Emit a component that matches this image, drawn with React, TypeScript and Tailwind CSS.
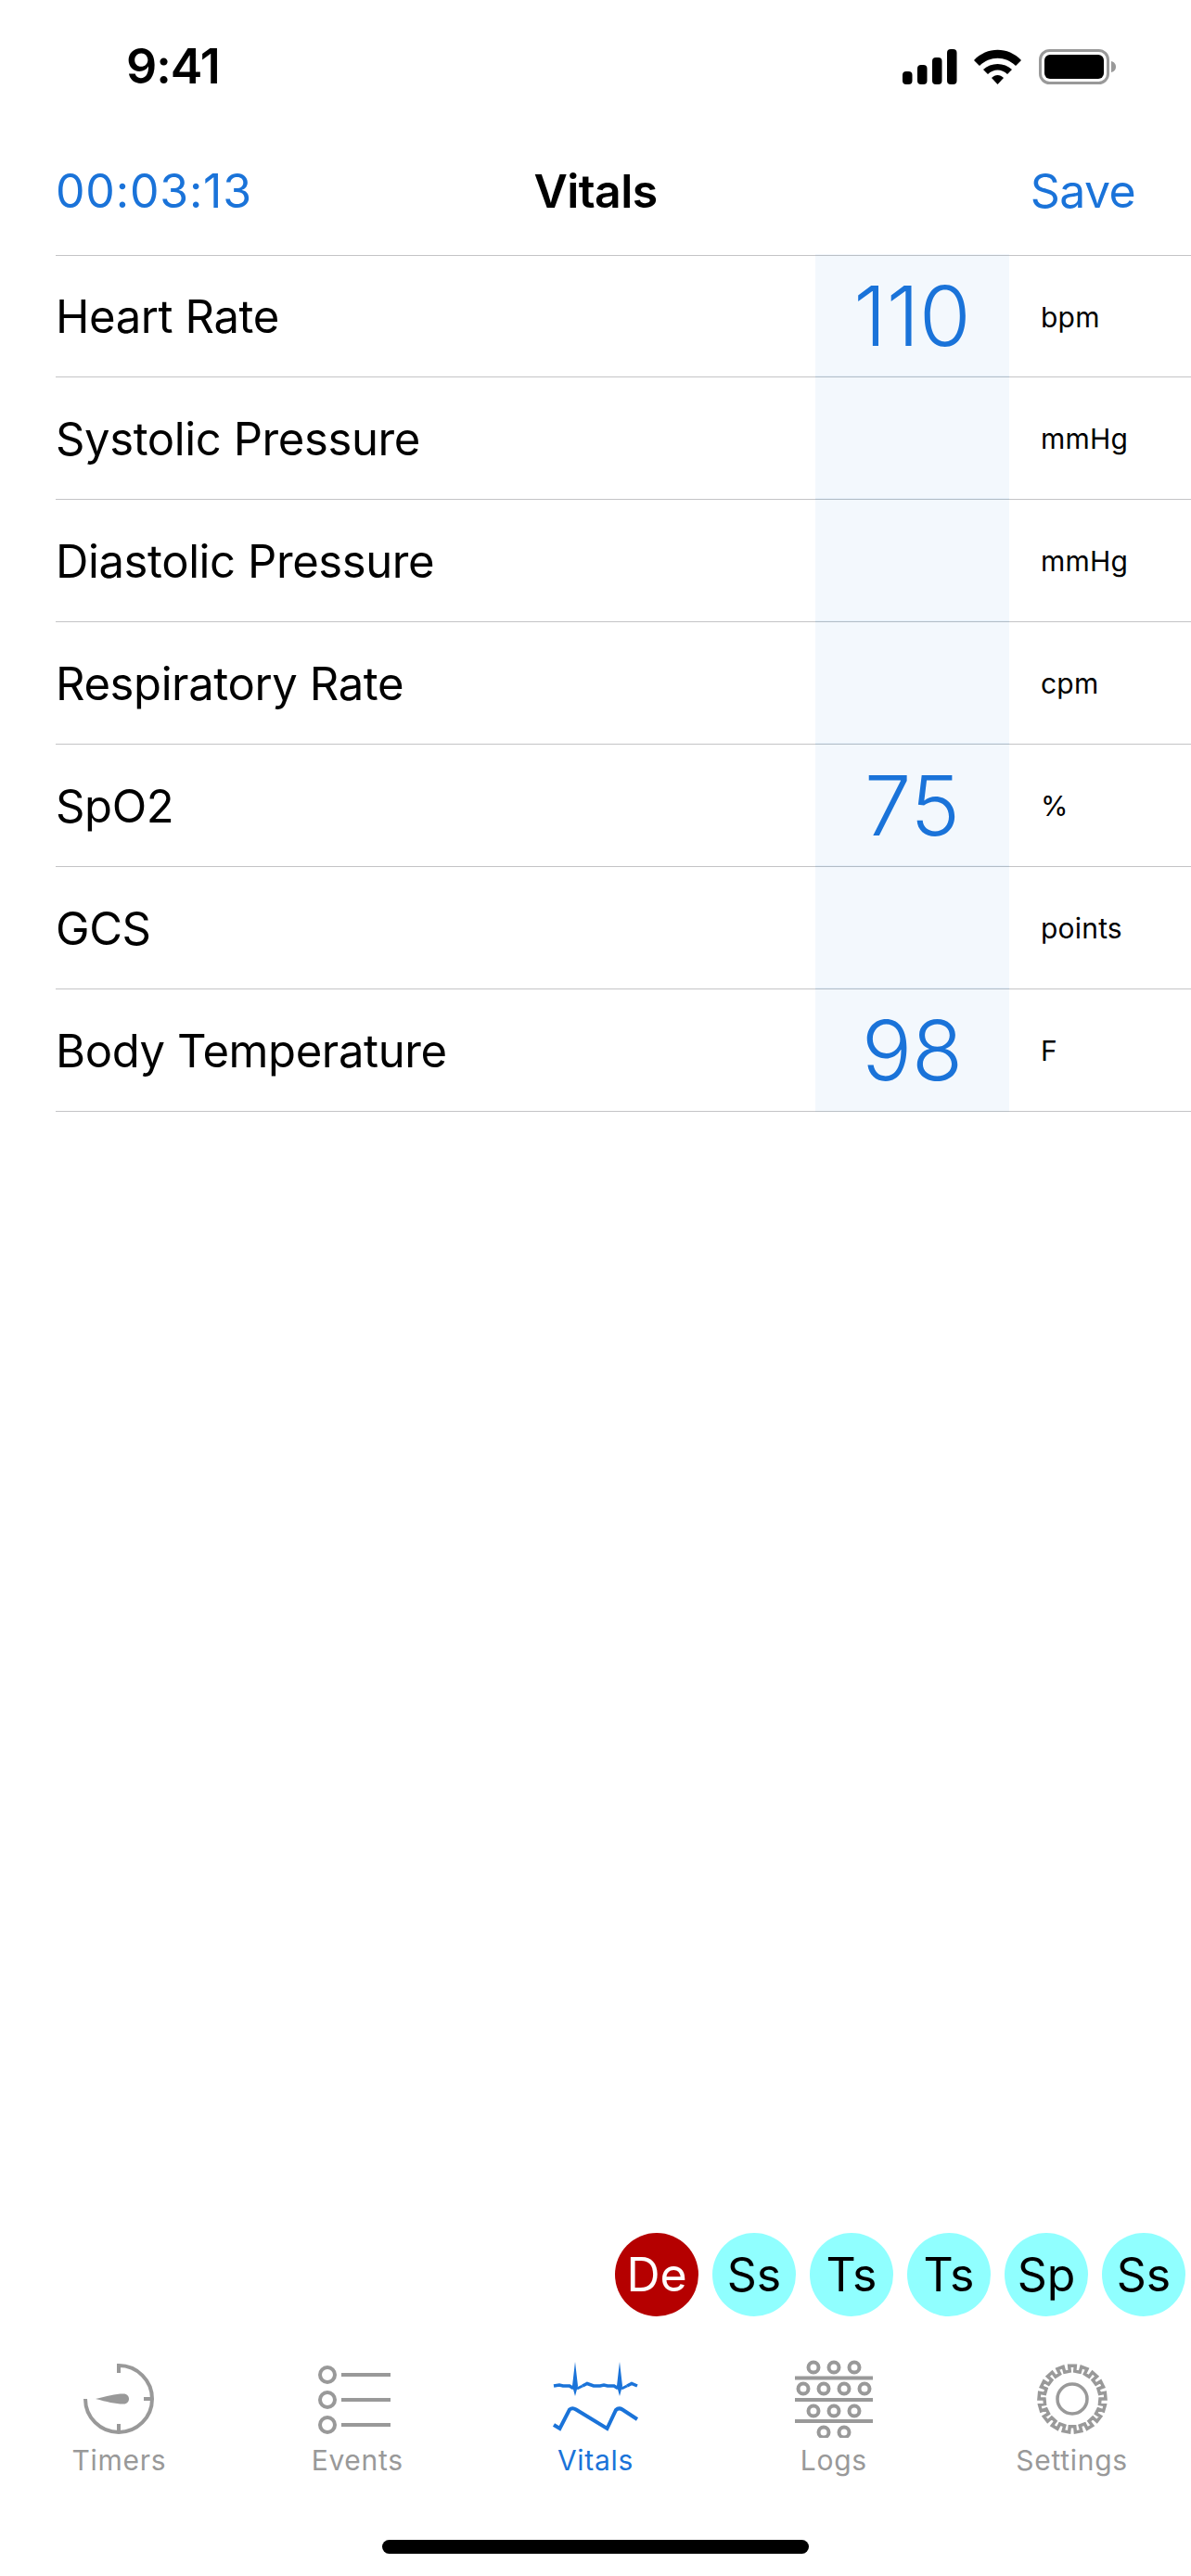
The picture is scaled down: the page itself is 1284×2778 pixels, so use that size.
const vitals = [
  { label: 'Heart Rate', value: '110', unit: 'bpm' },
  { label: 'Systolic Pressure', value: '', unit: 'mmHg' },
  { label: 'Diastolic Pressure', value: '', unit: 'mmHg' },
  { label: 'Respiratory Rate', value: '', unit: 'cpm' },
  { label: 'SpO2', value: '75', unit: '%' },
  { label: 'GCS', value: '', unit: 'points' },
  { label: 'Body Temperature', value: '98', unit: 'F' },
]

const badges = [
  { text: 'De', active: true },
  { text: 'Ss' },
  { text: 'Ts' },
  { text: 'Ts' },
  { text: 'Sp' },
  { text: 'Ss' },
]

const tabs = [
  { label: 'Timers', Icon: TimersIcon },
  { label: 'Events', Icon: EventsIcon },
  { label: 'Vitals', Icon: VitalsIcon, active: true },
  { label: 'Logs', Icon: LogsIcon },
  { label: 'Settings', Icon: SettingsIcon },
]

export default function App() {
  return (
    <div className="flex h-[2778px] flex-col overflow-hidden bg-white font-['Inter',sans-serif] text-black">
      {/* Status bar */}
      <div className="flex h-[144px] items-center justify-between pl-[136px] pr-[80px]">
        <span className="text-[52px] font-semibold tracking-[-1px]">9:41</span>
        <StatusIcons />
      </div>

      {/* Nav bar */}
      <div className="flex h-[131px] items-center justify-between px-[60px] pb-[6px] text-[50px]">
        <span className="w-[300px] tracking-[0.8px] text-[#1a73d9]">00:03:13</span>
        <span className="font-semibold tracking-[-0.6px]">Vitals</span>
        <span className="w-[300px] text-right tracking-[-0.6px] text-[#1a73d9]">Save</span>
      </div>

      {/* Vitals list */}
      <div className="ml-[60px] border-t border-[#c4c4c6]">
        {vitals.map((v) => (
          <div key={v.label} className="flex h-[132px] items-stretch border-b border-[#c4c4c6] first:h-[131px]">
            <div className="flex flex-1 items-center pt-[2px] text-[49px] tracking-[-0.4px]">{v.label}</div>
            <div className="-mb-px -mt-[2px] flex w-[209px] items-center justify-center bg-[#1a73d9]/5 text-[90px] font-light text-[#1a73d9]">
              {v.value}
            </div>
            <div className="flex w-[196px] items-center pl-[34px] pt-[2px] text-[30px] tracking-[0.2px]">{v.unit}</div>
          </div>
        ))}
      </div>

      <div className="flex-1" />

      {/* Staff badges */}
      <div className="flex justify-end gap-[15px] pr-[6px]">
        {badges.map((b, i) => (
          <div
            key={i}
            className={
              b.active
                ? 'flex h-[90px] w-[90px] items-center justify-center rounded-full bg-[#b50000] text-[50px] text-white'
                : 'flex h-[90px] w-[90px] items-center justify-center rounded-full bg-[#90ffff] text-[50px] text-black'
            }
          >
            {b.text}
          </div>
        ))}
      </div>

      {/* Tab bar */}
      <div className="mt-[47px] grid grid-cols-5">
        {tabs.map(({ label, Icon, active }) => (
          <div key={label} className="flex flex-col items-center">
            <Icon />
            <span className={active ? 'mt-[6px] text-[30px] leading-[36px] tracking-[0.7px] text-[#1a73d9]' : 'mt-[6px] text-[30px] leading-[36px] tracking-[0.7px] text-[#999999]'}>
              {label}
            </span>
          </div>
        ))}
      </div>

      {/* Home indicator */}
      <div className="mb-[24px] mt-[68px] flex justify-center">
        <div className="h-[15px] w-[460px] rounded-full bg-black" />
      </div>
    </div>
  )
}

function StatusIcons() {
  return (
    <svg width="232" height="40" viewBox="972 52 232 40">
      <rect x="973" y="77" width="10.5" height="14" rx="4" fill="#000" />
      <rect x="989" y="70" width="10.5" height="21" rx="4" fill="#000" />
      <rect x="1005" y="62" width="10.5" height="29" rx="4" fill="#000" />
      <rect x="1021" y="53" width="10.5" height="38" rx="4" fill="#000" />
      <path d="M1050 65 C1064 50 1087 50 1101 65 L1095 71 C1084 60 1067 60 1056 71 Z" fill="#000" />
      <path d="M1060 75 C1068 67 1083 67 1091 75 L1086 80 C1080 74 1071 74 1065 80 Z" fill="#000" />
      <path d="M1069 84 C1073 80 1078 80 1082 84 L1075.5 91 Z" fill="#000" />
      <rect x="1121.5" y="54.5" width="73" height="35" rx="10" fill="none" stroke="#999" strokeWidth="3" />
      <rect x="1126" y="59" width="64" height="26" rx="6" fill="#000" />
      <path d="M1198 66 C1202 67 1203 70 1203 72 C1203 74 1202 77 1198 78 Z" fill="#999" />
    </svg>
  )
}

function TimersIcon() {
  return (
    <svg width="100" height="84" viewBox="79 2544 100 84" fill="none" stroke="#999" strokeWidth="4">
      <path d="M129 2558 V2550 A36 36 0 1 1 93 2586" />
      <path d="M156 2586 H165 M129 2613 V2622" />
      <path d="M104 2586 C116 2583 125 2580.5 134 2580.5 C142 2580.5 142 2591.5 134 2591.5 C125 2591.5 116 2589 104 2586 Z" fill="#999" stroke="none" />
    </svg>
  )
}

function EventsIcon() {
  return (
    <svg width="100" height="84" viewBox="335 2544 100 84" fill="none" stroke="#999" strokeWidth="4">
      <circle cx="353" cy="2560" r="8" />
      <circle cx="353" cy="2587" r="8" />
      <circle cx="353" cy="2614" r="8" />
      <path d="M368 2560 H421 M368 2587 H421 M368 2614 H421" />
    </svg>
  )
}

function VitalsIcon() {
  return (
    <svg width="100" height="84" viewBox="592 2544 100 84" fill="none" stroke="#1a73d9" strokeWidth="4">
      <path d="M597 2572 L603 2571 L607 2572 H614 L617 2574 L620 2572 M628 2572 L633 2569.5 L640 2572 H647 L651 2571 L655 2572 H662 L665 2574 L668 2572 M676 2572 L681 2569.5 L687 2572" strokeWidth="3.5" />
      <path d="M617 2572 L620 2546 L623 2572 L620 2583 Z M665 2572 L668 2546 L671 2572 L668 2583 Z" fill="#1a73d9" stroke="none" />
      <path d="M628 2572 L622 2575 M676 2572 L670 2575" strokeWidth="3" />
      <path d="M597 2614 L603.5 2618 L614 2597.5 Q617 2595 621 2597.5 L654.5 2618 L664 2598 Q667 2595 671 2597.5 L687 2608" />
    </svg>
  )
}

function LogsIcon() {
  const rows = [
    { y: 2552, xs: [875, 897, 919] },
    { y: 2575, xs: [864, 886, 908, 930] },
    { y: 2599, xs: [875, 897, 919] },
    { y: 2622, xs: [886, 908] },
  ]
  return (
    <svg width="100" height="84" viewBox="847 2544 100 84" fill="none" stroke="#999" strokeWidth="4">
      {rows.map((r) => r.xs.map((x) => <circle key={`${x}-${r.y}`} cx={x} cy={r.y} r="5.5" />))}
      <path d="M855 2563.5 H939 M855 2587 H939 M855 2610 H939" />
    </svg>
  )
}

function SettingsIcon() {
  const cx = 1155
  const cy = 2586
  const teeth = 17
  let d = ''
  for (let i = 0; i < teeth; i++) {
    const step = (Math.PI * 2) / teeth
    const a = i * step - Math.PI / 2 - step / 4
    const pts: [number, number][] = [
      [30, a],
      [36, a],
      [36, a + step / 2],
      [30, a + step / 2],
    ]
    for (const [r, t] of pts) {
      d += `${d ? 'L' : 'M'}${(cx + r * Math.cos(t)).toFixed(2)} ${(cy + r * Math.sin(t)).toFixed(2)} `
    }
  }
  return (
    <svg width="100" height="84" viewBox="1105 2544 100 84" fill="none" stroke="#999" strokeWidth="3.5">
      <path d={`${d}Z`} />
      <circle cx={cx} cy={cy} r="16" />
    </svg>
  )
}
